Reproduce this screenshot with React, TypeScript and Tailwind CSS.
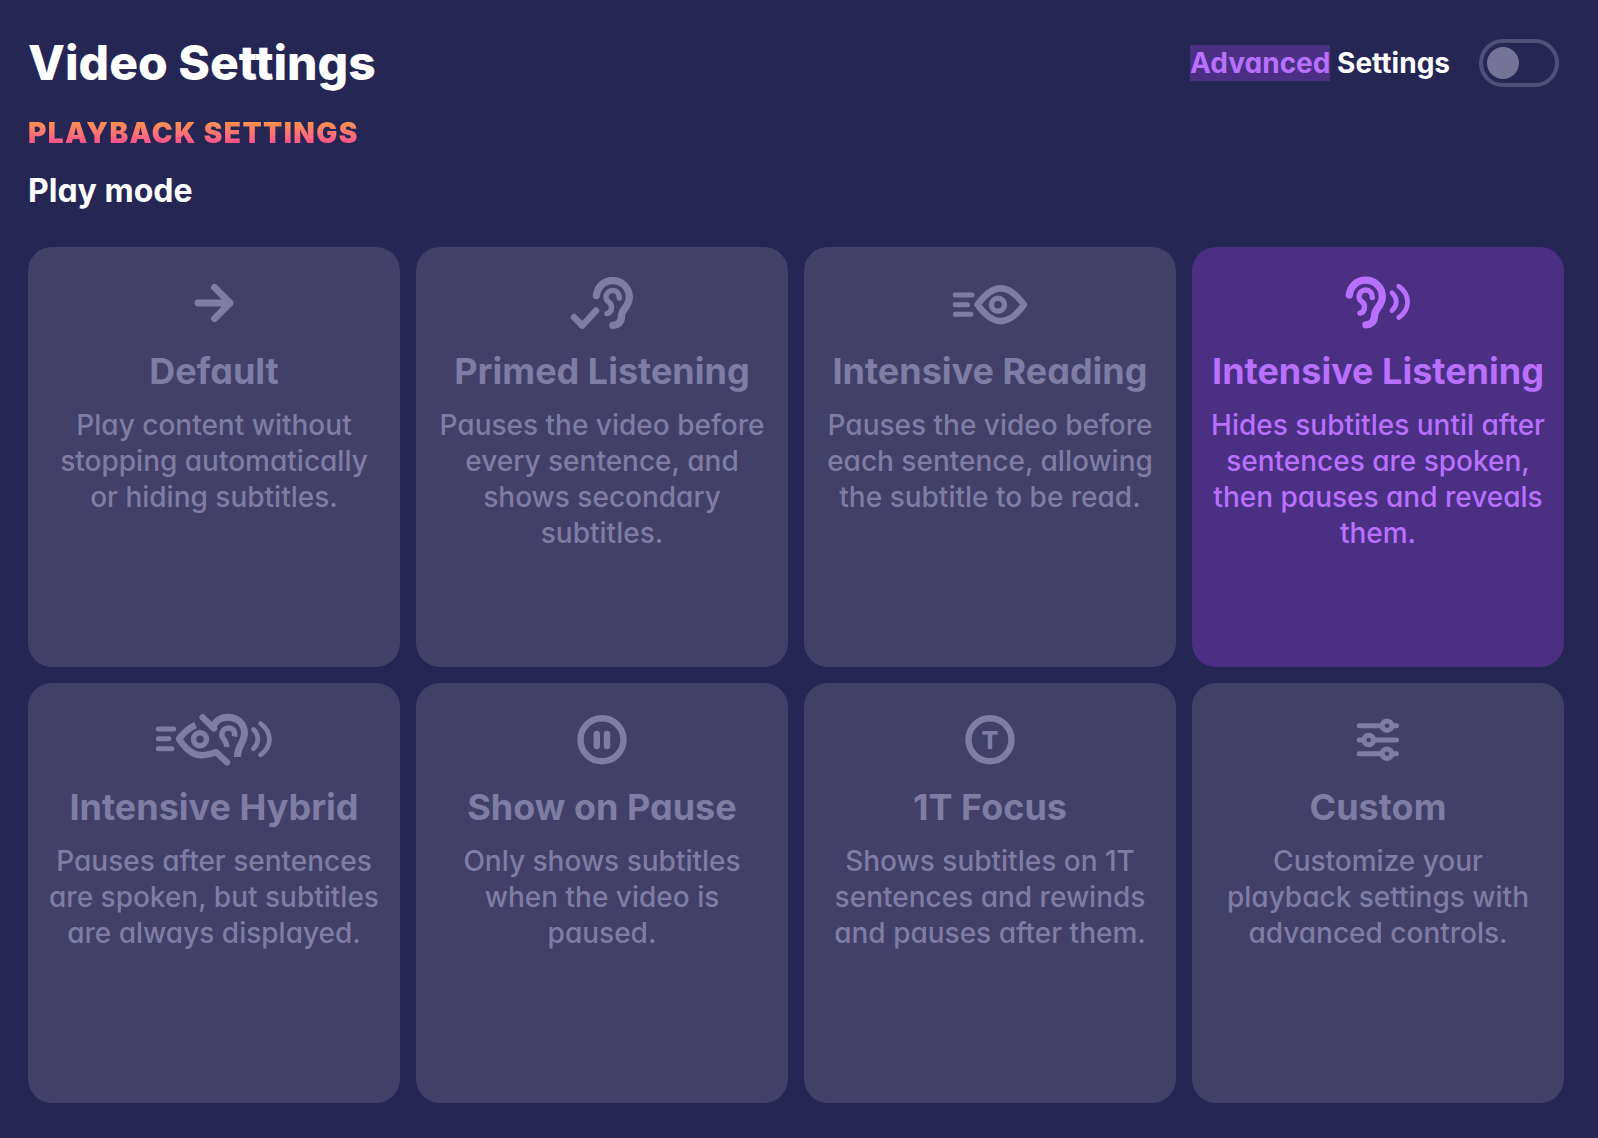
import React, { useState } from 'react';

function Ear() {
  return (
    <>
      <path strokeWidth="7.3" d="M54.3 24.5 C55.5 15.5 62 9.7 70.7 9.7 C80 9.7 87.3 17 87.3 26 C87.3 36 79.5 38 79.5 45 C79.5 51 76.5 54.3 70.9 54.3" />
      <path strokeWidth="5.4" d="M77.3 27 C77.3 22.5 74.5 19.5 70.7 19.5 C67 19.5 64 22.5 64 26.5 C64 31.5 69.5 30.5 69.5 36 C69.5 40 68 42 65 42.6" />
    </>
  );
}

const icons: Record<string, React.ReactNode> = {
  default: <path strokeWidth="6.8" d="M44 32 H76 M60.5 16.3 L76 32 L60.5 47.7" />,
  primed: (
    <>
      <Ear />
      <path strokeWidth="6.5" d="M32 46.3 L40.3 54.6 L54 39.6" />
    </>
  ),
  reading: (
    <>
      <path strokeWidth="5" d="M25.2 24 H42 M25.2 33.7 H37.5 M25.2 43.3 H41" />
      <path strokeWidth="6.4" d="M47.5 33.7 C53 26 60.5 17.2 70.7 17.2 C81 17.2 88.5 26 94 33.7 C88.5 41.5 81 50.2 70.7 50.2 C60.5 50.2 53 41.5 47.5 33.7 Z" />
      <circle strokeWidth="5.4" cx="68" cy="33.7" r="6.5" />
    </>
  ),
  listening: (
    <>
      <g transform="translate(-23 -0.5)">
        <Ear />
      </g>
      <path strokeWidth="4.8" d="M74 21.8 C79.8 27.5 79.8 34 74 39.6 M80.8 15.3 C92.5 24 92.5 38 80.8 46.5" />
    </>
  ),
  hybrid: (
    <>
      <path strokeWidth="5" d="M4.3 22 H19.6 M4.3 31.7 H14.8 M4.3 41.7 H18" />
      <path strokeWidth="6.4" strokeLinecap="butt" d="M41.5 18 C34 21.5 29 26.5 25 32 C30.5 40.5 38 48.3 47.5 48.3 C54 48.3 58 46 62.5 45.5" />
      <path strokeWidth="6.4" d="M62.5 45.5 L73 55.3 M48.6 10.3 L60 21.5" />
      <circle strokeWidth="5.4" cx="46" cy="32.3" r="6.5" />
      <path strokeWidth="7" strokeLinecap="butt" d="M58.5 21 C61 14 67 10.2 74 10.2 C83.5 10.2 90.5 17 90.5 26 C90.5 36 83.5 38 83.3 50" />
      <path strokeWidth="5.5" strokeLinecap="butt" d="M80.5 29.5 C81.5 23.5 78.5 21 74.5 21 C70.5 21 67.8 24 67.8 28 C67.8 32 73 33 72.5 40" />
      <path strokeWidth="4.8" d="M99.5 22.6 C105.2 28 105.2 36 99.5 41.6 M106.7 16.6 C118.3 25 118.3 39.5 106.7 47.8" />
    </>
  ),
  pause: (
    <>
      <circle strokeWidth="6.4" cx="60" cy="32.7" r="21.5" />
      <path strokeWidth="6.4" d="M54.8 27 V39 M65 27 V39" />
    </>
  ),
  focus: (
    <>
      <circle strokeWidth="6.4" cx="60" cy="32.7" r="21.5" />
      <text x="60" y="42" textAnchor="middle" fill="currentColor" stroke="none" fontSize="25" fontWeight="800">T</text>
    </>
  ),
  custom: (
    <>
      <path strokeWidth="5" d="M41.2 18.7 H62 M76 18.7 H78.5 M41.2 33 H44 M57 33 H78.5 M41.2 46.7 H62 M76 46.7 H78.5" />
      <circle strokeWidth="5" cx="69" cy="18.7" r="4.8" />
      <circle strokeWidth="5" cx="50.7" cy="33" r="4.8" />
      <circle strokeWidth="5" cx="69" cy="46.7" r="4.8" />
    </>
  ),
};

const modes = [
  { id: 'default', title: 'Default', text: 'Play content without stopping automatically or hiding subtitles.' },
  { id: 'primed', title: 'Primed Listening', text: 'Pauses the video before every sentence, and shows secondary subtitles.' },
  { id: 'reading', title: 'Intensive Reading', text: 'Pauses the video before each sentence, allowing the subtitle to be read.' },
  { id: 'listening', title: 'Intensive Listening', text: 'Hides subtitles until after sentences are spoken, then pauses and reveals them.' },
  { id: 'hybrid', title: 'Intensive Hybrid', text: 'Pauses after sentences are spoken, but subtitles are always displayed.' },
  { id: 'pause', title: 'Show on Pause', text: 'Only shows subtitles when the video is paused.' },
  { id: 'focus', title: '1T Focus', text: 'Shows subtitles on 1T sentences and rewinds and pauses after them.' },
  { id: 'custom', title: 'Custom', text: 'Customize your playback settings with advanced controls.' },
];

export default function App() {
  const [mode, setMode] = useState('listening');
  const [advanced, setAdvanced] = useState(false);

  return (
    <main className="min-h-screen bg-[#262655] pt-[33px] pr-[34px] pb-8 pl-7 font-['Inter',sans-serif] [font-feature-settings:'cv11'] text-white">
      <header className="flex items-center justify-between pr-[5px]">
        <h1 className="text-5xl leading-[60px] font-extrabold">Video Settings</h1>
        <div className="flex items-center gap-[29px]">
          <label htmlFor="advanced" className="text-[28px] leading-9 font-bold">
            <mark className="inline-block bg-[#4a2f83] text-[#b970ff]">Advanced</mark> Settings
          </label>
          <input
            id="advanced"
            type="checkbox"
            role="switch"
            checked={advanced}
            onChange={(e) => setAdvanced(e.target.checked)}
            className="flex h-12 w-20 appearance-none items-center rounded-full border-4 border-[#514f77] px-1 before:size-8 before:rounded-full before:bg-[#757396] checked:justify-end"
          />
        </div>
      </header>

      <h2 className="mt-[22px] bg-linear-to-b from-[#ff9838] from-10% to-[#ff4094] to-90% bg-clip-text text-[28px] leading-9 font-black tracking-wider text-transparent uppercase">
        Playback Settings
      </h2>
      <h3 className="mt-5 text-[32px] leading-10 font-bold">Play mode</h3>

      <div className="mt-9 grid grid-cols-4 gap-4">
        {modes.map((item) => (
          <button
            key={item.id}
            type="button"
            aria-pressed={mode === item.id}
            onClick={() => setMode(item.id)}
            className={`flex min-h-[420px] flex-col items-center gap-3 rounded-3xl px-4 py-6 text-center ${
              mode === item.id ? 'bg-[#4a2f83] text-[#b970ff]' : 'bg-[#424069] text-[#7f7da3]'
            }`}
          >
            <svg className="h-16 w-[120px] shrink-0" viewBox="0 0 120 64" fill="none" stroke="currentColor" strokeLinecap="round" strokeLinejoin="round" aria-hidden="true">
              {icons[item.id]}
            </svg>
            <span className="text-4xl leading-12 font-bold whitespace-nowrap">{item.title}</span>
            <span className="text-[28px] leading-9 font-medium">{item.text}</span>
          </button>
        ))}
      </div>
    </main>
  );
}
